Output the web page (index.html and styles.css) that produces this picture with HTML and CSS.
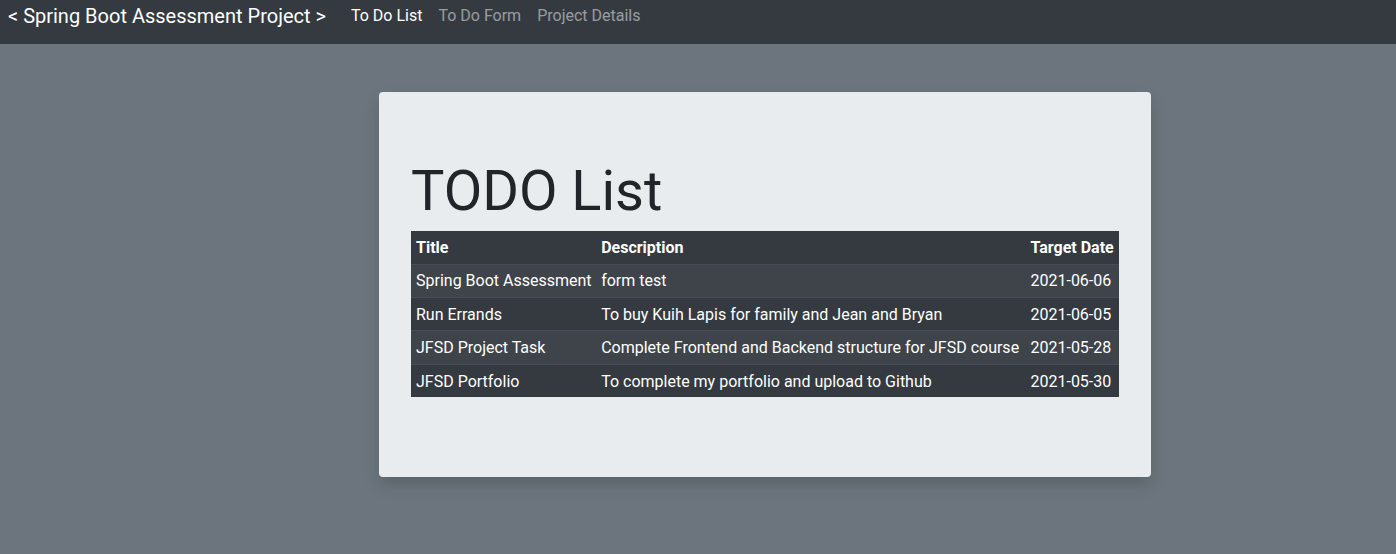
FILE: index.html
```html
<!DOCTYPE html>
<html lang="en">
<head>
<meta charset="utf-8">
<title>TODO List</title>
<link rel="stylesheet" href="styles.css">
</head>
<body>
<nav class="navbar">
  <a class="brand" href="#">&lt; Spring Boot Assessment Project &gt;</a>
  <ul class="nav">
    <li><a class="nav-link active" href="#">To Do List</a></li>
    <li><a class="nav-link" href="#">To Do Form</a></li>
    <li><a class="nav-link" href="#">Project Details</a></li>
  </ul>
</nav>
<main class="main">
  <section class="card">
    <h1 class="title">TODO List</h1>
    <table class="table">
      <thead>
        <tr><th>Title</th><th>Description</th><th>Target Date</th></tr>
      </thead>
      <tbody>
        <tr><td>Spring Boot Assessment</td><td>form test</td><td>2021-06-06</td></tr>
        <tr><td>Run Errands</td><td>To buy Kuih Lapis for family and Jean and Bryan</td><td>2021-06-05</td></tr>
        <tr><td>JFSD Project Task</td><td>Complete Frontend and Backend structure for JFSD course</td><td>2021-05-28</td></tr>
        <tr><td>JFSD Portfolio</td><td>To complete my portfolio and upload to Github</td><td>2021-05-30</td></tr>
      </tbody>
    </table>
  </section>
</main>
</body>
</html>
```

FILE: styles.css
```css
* { box-sizing: border-box; }
html, body { margin: 0; padding: 0; }
body {
  background: #6c757d;
  font-family: Roboto, "Liberation Sans", Arial, sans-serif;
  font-size: 16px;
  line-height: 1.5;
  color: #212529;
  min-height: 554px;
}
.navbar {
  background: #343a40;
  height: 44px;
  display: flex;
  align-items: flex-start;
  padding: 0 8px;
}
.brand {
  color: #fff;
  text-decoration: none;
  font-size: 20px;
  line-height: 30px;
  margin-top: 1px;
  margin-right: 17px;
  white-space: nowrap;
}
.nav {
  list-style: none;
  margin: 0;
  padding: 0;
  display: flex;
}
.nav-link {
  display: block;
  padding: 4px 8px;
  color: rgba(255,255,255,0.5);
  text-decoration: none;
  font-size: 16px;
  line-height: 24px;
}
.nav-link.active { color: #fff; }
.main {
  padding: 48px 0 0 379px;
}
.card {
  width: 772px;
  background: #e9ecef;
  border-radius: 4px;
  padding: 64px 32px;
  box-shadow: 0 8px 16px rgba(0,0,0,0.15);
}
.title {
  margin: 2px 0 6px;
  font-size: 56px;
  font-weight: 400;
  line-height: 1.2;
  color: #212529;
}
.table {
  width: 100%;
  border-collapse: collapse;
  background: #343a40;
  color: #fff;
  margin-bottom: 16px;
}
.table th, .table td {
  padding: 4.9px 5px 3.5px 5px;
  text-align: left;
  vertical-align: top;
  white-space: nowrap;
  border-top: 1px solid #454d55;
}
.table th:first-child, .table td:first-child { padding-right: 4px; }
.table thead th {
  font-weight: 700;
  border-top: none;
  border-bottom: 1px solid #454d55;
}
.table tbody tr:first-child td { border-top: none; }
.table tbody tr:nth-child(odd) { background: rgba(255,255,255,0.05); }
```
